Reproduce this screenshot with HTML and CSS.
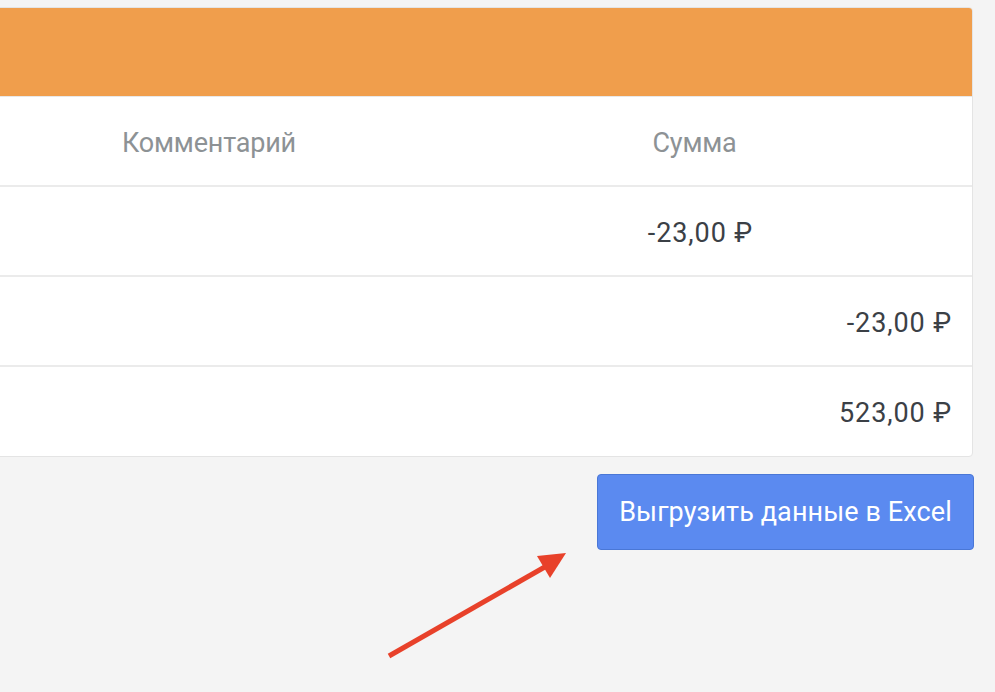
FILE: index.html
```html
<!DOCTYPE html>
<html lang="ru">
<head>
<meta charset="utf-8">
<link rel="stylesheet" href="styles.css">
</head>
<body>
<div class="page">
  <div class="card">
    <div class="card-head"></div>
    <div class="row row-head">
      <div class="cell">Комментарий</div>
      <div class="cell">Сумма</div>
    </div>
    <div class="row">
      <div class="cell"></div>
      <div class="cell value value-center">-23,00 ₽</div>
    </div>
    <div class="row total">
      <div class="cell value">-23,00 ₽</div>
    </div>
    <div class="row total">
      <div class="cell value">523,00 ₽</div>
    </div>
  </div>
  <div class="actions">
    <button class="btn">Выгрузить данные в Excel</button>
  </div>
</div>
<svg class="arrow" width="995" height="692" viewBox="0 0 995 692">
  <line x1="389" y1="656" x2="550" y2="564" stroke="#e8412a" stroke-width="5"/>
  <polygon points="537,556 566,553 550,578" fill="#e8412a"/>
</svg>
</body>
</html>
```
FILE: styles.css
```css
* { box-sizing: border-box; }
html, body { margin: 0; padding: 0; }
body {
  background: #f4f4f4;
  font-family: Roboto, "Noto Sans", sans-serif;
  width: 995px;
  height: 692px;
  overflow: hidden;
  position: relative;
}
.page {
  padding: 7px 22px 0 0;
}
.card {
  margin-left: -6px;
  background: #fff;
  border: 1px solid #e4e4e4;
  border-radius: 4px;
  overflow: hidden;
}
.card-head {
  height: 89px;
  background: #f09e4c;
  border-bottom: 1px solid #e8e8e8;
}
.row {
  display: grid;
  grid-template-columns: 428px 1fr;
  height: 90px;
  align-items: center;
  border-bottom: 2px solid #ebebeb;
  padding: 3px 6px 0 0;
}
.row:last-child { border-bottom: none; height: 89px; }
.row-head .cell {
  color: #8d9295;
  font-size: 27px;
  letter-spacing: -0.2px;
  text-align: center;
}
.cell { text-align: center; }
.value {
  color: #3b4046;
  font-size: 27px;
  letter-spacing: 0.9px;
}
.value-center { padding-left: 12px; }
.row.total {
  grid-template-columns: 1fr;
  padding-right: 20px;
}
.row.total .value { text-align: right; }
.actions {
  display: flex;
  justify-content: flex-end;
  padding-top: 17px;
}
.btn {
  width: 377px;
  height: 76px;
  background: #5b8af0;
  border: 1px solid #4a77d6;
  border-radius: 4px;
  color: #fff;
  font-family: Roboto, "Noto Sans", sans-serif;
  font-size: 27px;
  letter-spacing: 0.1px;
  padding: 0;
  margin-right: -1px;
}
.arrow {
  position: absolute;
  left: 0;
  top: 0;
  pointer-events: none;
}
```
